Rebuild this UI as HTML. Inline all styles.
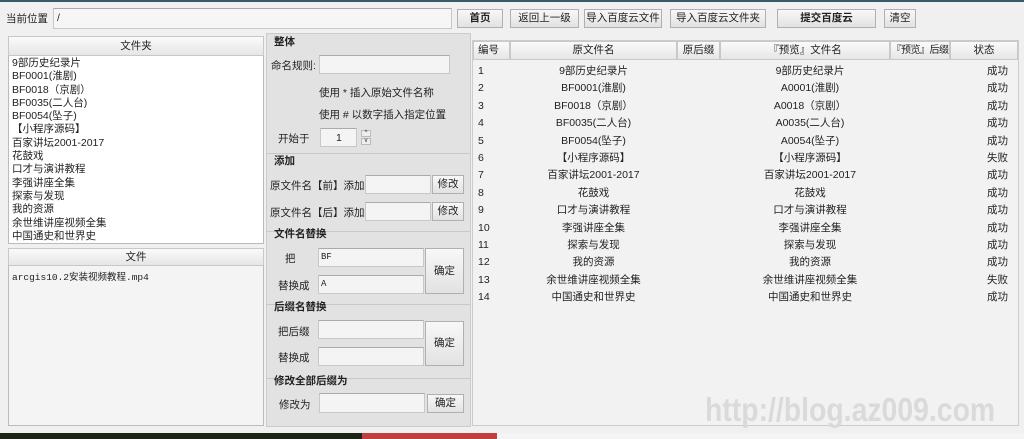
<!DOCTYPE html>
<html><head><meta charset="utf-8"><style>
*{margin:0;padding:0;box-sizing:border-box}
body{width:1024px;height:439px;overflow:hidden;background:#f0f0f0;position:relative;font-family:"Liberation Sans","Noto Sans CJK SC",sans-serif;font-size:10.5px;color:#222}
.a{position:absolute;white-space:nowrap}
.in{position:absolute;background:#f4f4f4;border:1px solid #c8c8c8;border-top-color:#aaa}
.btn{position:absolute;background:linear-gradient(#f8f8f8,#e2e2e2);border:1px solid #b0b0b0;text-align:center;font-size:10.5px;white-space:nowrap}
.hd{position:absolute;background:linear-gradient(#fafafa,#e6e6e6);border:1px solid #c8c8c8;text-align:center;white-space:nowrap;overflow:hidden}
.b{font-weight:bold}
.sec{position:absolute;left:266px;width:205px;height:1px;background:#c8c8c8}
</style></head><body>
<div class="a" style="left:0;top:0;width:1024px;height:2px;background:#3a5a6a"></div>
<div class="a" style="left:6px;top:11px">当前位置</div>
<div class="in" style="left:53px;top:8px;width:399px;height:21px;background:#f6f6f6"><span class="a" style="left:3px;top:3px">/</span></div>
<div class="btn b" style="left:457px;top:9px;width:46px;height:19px;line-height:17px">首页</div>
<div class="btn" style="left:510px;top:9px;width:69px;height:19px;line-height:17px">返回上一级</div>
<div class="btn" style="left:584px;top:9px;width:78px;height:19px;line-height:17px">导入百度云文件</div>
<div class="btn" style="left:670px;top:9px;width:96px;height:19px;line-height:17px">导入百度云文件夹</div>
<div class="btn b" style="left:777px;top:9px;width:99px;height:19px;line-height:17px">提交百度云</div>
<div class="btn" style="left:884px;top:9px;width:32px;height:19px;line-height:17px">清空</div>

<div class="a" style="left:8px;top:36px;width:256px;height:208px;background:#fff;border:1px solid #bbb"></div>
<div class="hd" style="left:8px;top:36px;width:256px;height:20px;line-height:18px">文件夹</div>
<div class="a" style="left:12px;top:57px;line-height:13.3px;font-size:10.5px">9部历史纪录片<br>BF0001(淮剧)<br>BF0018（京剧）<br>BF0035(二人台)<br>BF0054(坠子)<br>【小程序源码】<br>百家讲坛2001-2017<br>花鼓戏<br>口才与演讲教程<br>李强讲座全集<br>探索与发现<br>我的资源<br>余世维讲座视频全集<br>中国通史和世界史</div>
<div class="a" style="left:8px;top:248px;width:256px;height:178px;background:#f4f4f4;border:1px solid #bbb"></div>
<div class="hd" style="left:8px;top:248px;width:256px;height:18px;line-height:16px">文件</div>
<div class="a" style="left:12px;top:269px;font-family:'Liberation Mono','Noto Sans CJK SC',monospace;font-size:9.5px">arcgis10.2安装视频教程.mp4</div>

<div class="a" style="left:266px;top:33px;width:205px;height:394px;background:#e2e2e2;border:1px solid #ccc"></div>
<div class="a b" style="left:274px;top:34px">整体</div>
<div class="a" style="left:271px;top:58px">命名规则:</div>
<div class="in" style="left:319px;top:55px;width:131px;height:19px"></div>
<div class="a" style="left:319px;top:85px">使用 * 插入原始文件名称</div>
<div class="a" style="left:319px;top:107px">使用 # 以数字插入指定位置</div>
<div class="a" style="left:278px;top:131px">开始于</div>
<div class="in" style="left:320px;top:128px;width:37px;height:19px"><span class="a" style="left:15px;top:3px">1</span></div>
<div class="a" style="left:361px;top:130px;width:10px;height:7px;border:1px solid #bbb;background:#eee;font-size:6px;line-height:5px;text-align:center">^</div>
<div class="a" style="left:361px;top:138px;width:10px;height:7px;border:1px solid #bbb;background:#eee;font-size:6px;line-height:5px;text-align:center">v</div>
<div class="sec" style="top:153px"></div>
<div class="a b" style="left:274px;top:153px">添加</div>
<div class="a" style="left:270px;top:178px">原文件名【前】添加</div>
<div class="in" style="left:365px;top:175px;width:66px;height:19px"></div>
<div class="btn" style="left:432px;top:175px;width:32px;height:19px;line-height:17px">修改</div>
<div class="a" style="left:270px;top:205px">原文件名【后】添加</div>
<div class="in" style="left:365px;top:202px;width:66px;height:19px"></div>
<div class="btn" style="left:432px;top:202px;width:32px;height:19px;line-height:17px">修改</div>
<div class="sec" style="top:231px"></div>
<div class="a b" style="left:274px;top:226px">文件名替换</div>
<div class="a" style="left:285px;top:251px">把</div>
<div class="in" style="left:318px;top:248px;width:106px;height:19px"><span class="a" style="left:2px;top:3px;font-size:9px;font-family:'Liberation Mono',monospace">BF</span></div>
<div class="a" style="left:278px;top:278px">替换成</div>
<div class="in" style="left:318px;top:275px;width:106px;height:19px"><span class="a" style="left:2px;top:3px;font-size:9px;font-family:'Liberation Mono',monospace">A</span></div>
<div class="btn" style="left:425px;top:248px;width:39px;height:46px;line-height:44px">确定</div>
<div class="sec" style="top:304px"></div>
<div class="a b" style="left:274px;top:299px">后缀名替换</div>
<div class="a" style="left:278px;top:324px">把后缀</div>
<div class="in" style="left:318px;top:320px;width:106px;height:19px"></div>
<div class="a" style="left:278px;top:350px">替换成</div>
<div class="in" style="left:318px;top:347px;width:106px;height:19px"></div>
<div class="btn" style="left:425px;top:321px;width:39px;height:45px;line-height:43px">确定</div>
<div class="sec" style="top:378px"></div>
<div class="a b" style="left:274px;top:373px">修改全部后缀为</div>
<div class="a" style="left:279px;top:397px">修改为</div>
<div class="in" style="left:319px;top:393px;width:106px;height:20px"></div>
<div class="btn" style="left:427px;top:394px;width:37px;height:19px;line-height:17px">确定</div>

<div class="a" style="left:472px;top:40px;width:547px;height:386px;background:#f2f2f2;border:1px solid #ccc"></div>
<div class="hd" style="left:473px;top:41px;width:37px;height:19px;line-height:17px;text-align:left;padding-left:4px">编号</div>
<div class="hd" style="left:510px;top:41px;width:167px;height:19px;line-height:17px">原文件名</div>
<div class="hd" style="left:677px;top:41px;width:43px;height:19px;line-height:17px">原后缀</div>
<div class="hd" style="left:720px;top:41px;width:170px;height:19px;line-height:17px">『预览』文件名</div>
<div class="hd" style="left:890px;top:41px;width:60px;height:19px;line-height:17px;font-size:10px;letter-spacing:-0.5px">『预览』后缀</div>
<div class="hd" style="left:950px;top:41px;width:68px;height:19px;line-height:17px">状态</div>
<div class="a" style="left:478px;top:63px;line-height:17.4px">1<br>2<br>3<br>4<br>5<br>6<br>7<br>8<br>9<br>10<br>11<br>12<br>13<br>14</div>
<div class="a" style="left:510px;top:63px;width:167px;text-align:center;line-height:17.4px">9部历史纪录片<br>BF0001(淮剧)<br>BF0018（京剧）<br>BF0035(二人台)<br>BF0054(坠子)<br>【小程序源码】<br>百家讲坛2001-2017<br>花鼓戏<br>口才与演讲教程<br>李强讲座全集<br>探索与发现<br>我的资源<br>余世维讲座视频全集<br>中国通史和世界史</div>
<div class="a" style="left:725px;top:63px;width:170px;text-align:center;line-height:17.4px">9部历史纪录片<br>A0001(淮剧)<br>A0018（京剧）<br>A0035(二人台)<br>A0054(坠子)<br>【小程序源码】<br>百家讲坛2001-2017<br>花鼓戏<br>口才与演讲教程<br>李强讲座全集<br>探索与发现<br>我的资源<br>余世维讲座视频全集<br>中国通史和世界史</div>
<div class="a" style="left:987px;top:63px;line-height:17.4px">成功<br>成功<br>成功<br>成功<br>成功<br>失败<br>成功<br>成功<br>成功<br>成功<br>成功<br>成功<br>失败<br>成功</div>
<div class="a b" style="left:705px;top:392px;font-size:33px;line-height:36px;color:#dadada;font-family:'Liberation Sans',sans-serif;transform:scaleX(0.86);transform-origin:left">http://blog.az009.com</div>

<div class="a" style="left:0;top:433px;width:1024px;height:6px;background:#1c2418"></div>
<div class="a" style="left:362px;top:433px;width:135px;height:6px;background:#c04040"></div>
<div class="a" style="left:497px;top:433px;width:527px;height:6px;background:#f4f4f4"></div>
</body></html>
